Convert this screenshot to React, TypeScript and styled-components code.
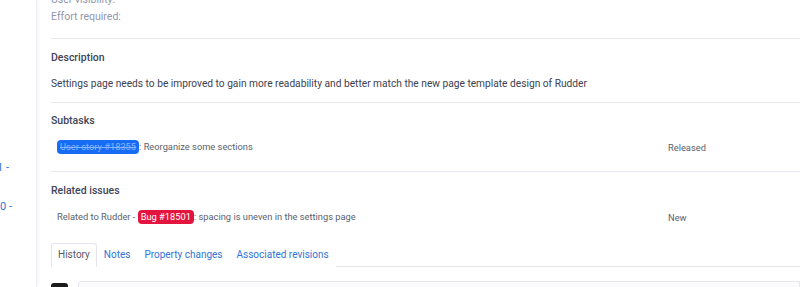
import React from 'react';
import styled, { createGlobalStyle } from 'styled-components';

const GlobalStyle = createGlobalStyle`
  html, body {
    margin: 0;
    padding: 0;
    background: #ffffff;
    overflow: hidden;
  }
  body {
    font-family: Roboto, 'Noto Sans', sans-serif;
    color: #41465a;
  }
`;

type Issue = {
  prefix?: string;
  tracker: string;
  number: number;
  subject: string;
  status: string;
  closed?: boolean;
  kind: 'story' | 'bug';
};

const subtasks: Issue[] = [
  { tracker: 'User story', number: 18355, subject: 'Reorganize some sections', status: 'Released', closed: true, kind: 'story' },
];

const related: Issue[] = [
  { prefix: 'Related to Rudder - ', tracker: 'Bug', number: 18501, subject: 'spacing is uneven in the settings page', status: 'New', kind: 'bug' },
];

const tabs = ['History', 'Notes', 'Property changes', 'Associated revisions'];

const IssueList: React.FC<{ issues: Issue[] }> = ({ issues }) => (
  <IssueTable>
    {issues.map(issue => (
      <IssueRow key={issue.number}>
        <Subject>
          {issue.prefix}
          <Badge kind={issue.kind} closed={issue.closed}>
            {issue.tracker} #{issue.number}
          </Badge>
          : {issue.subject}
        </Subject>
        <Status>{issue.status}</Status>
      </IssueRow>
    ))}
  </IssueTable>
);

const App: React.FC = () => {
  return (
    <Page>
      <GlobalStyle />
      <Sidebar>
        <VersionLink offset={-12} top={162}>7.1 -</VersionLink>
        <VersionLink offset={-9} top={27}>8.0 -</VersionLink>
      </Sidebar>
      <Main>
        <Attributes>
          <Attribute>User visibility:</Attribute>
          <Attribute>Effort required:</Attribute>
        </Attributes>

        <Section bottom={10}>
          <Heading>Description</Heading>
          <Paragraph>
            Settings page needs to be improved to gain more readability and better match the new page
            template design of Rudder
          </Paragraph>
        </Section>

        <Section top={9} bottom={14}>
          <Heading>Subtasks</Heading>
          <IssueList issues={subtasks} />
        </Section>

        <Section bottom={3} last>
          <Heading>Related issues</Heading>
          <IssueList issues={related} />
        </Section>

        <Tabs>
          {tabs.map((tab, i) => (
            <Tab key={tab} active={i === 0}>
              {tab}
            </Tab>
          ))}
        </Tabs>

        <Journal>
          <Avatar />
          <CommentBox />
        </Journal>
      </Main>
    </Page>
  );
};

const Page = styled.div`
  display: flex;
  height: 287px;
  overflow: hidden;
`;

const Sidebar = styled.div`
  width: 36px;
  flex-shrink: 0;
  overflow: hidden;
  border-right: 1px solid #efeff5;
  box-shadow: 1px 0 3px rgba(40, 40, 90, 0.06);
  display: flex;
  flex-direction: column;
`;

const VersionLink = styled.div<{ offset: number; top: number }>`
  margin-left: ${p => p.offset}px;
  margin-top: ${p => p.top}px;
  white-space: nowrap;
  font-size: 11px;
  line-height: 12px;
  color: #2f74d6;
`;

const Main = styled.div`
  flex: 1;
  padding-left: 14px;
  min-width: 0;
  display: flex;
  flex-direction: column;
`;

const Attributes = styled.div`
  margin-top: -9px;
  padding-bottom: 13px;
  border-bottom: 1px solid #e8e8f1;
`;

const Attribute = styled.div`
  font-size: 10.5px;
  line-height: 17px;
  color: #9196ad;
`;

const Section = styled.div<{ top?: number; bottom: number; last?: boolean }>`
  padding: ${p => p.top ?? 10}px 0 ${p => p.bottom}px;
  border-bottom: ${p => (p.last ? 'none' : '1px solid #e8e8f1')};
`;

const Heading = styled.div`
  font-size: 10.5px;
  font-weight: 500;
  line-height: 16px;
  padding: 1px 0 8px;
  color: #3f4456;
`;

const Paragraph = styled.p`
  margin: 0;
  padding-top: 2px;
  font-size: 10.2px;
  line-height: 16px;
  color: #3c4150;
`;

const IssueTable = styled.div`
  display: flex;
  flex-direction: column;
  gap: 3px;
`;

const IssueRow = styled.div`
  display: grid;
  grid-template-columns: 611px 1fr;
  align-items: center;
  padding-left: 6px;
  height: 20px;
  font-size: 9.3px;
  color: #5a5f70;
`;

const Subject = styled.div`
  white-space: nowrap;
`;

const Status = styled.div`
  color: #5a5f70;
`;

const Badge = styled.span<{ kind: 'story' | 'bug'; closed?: boolean }>`
  display: inline-block;
  padding: 0 3px;
  border-radius: 4px;
  line-height: 14px;
  color: ${p => (p.kind === 'story' ? '#86b5ff' : '#ffffff')};
  background: ${p => (p.kind === 'story' ? '#166cf5' : '#e3143e')};
  text-decoration: ${p => (p.closed ? 'line-through' : 'none')};
`;

const Tabs = styled.div`
  display: flex;
  margin-top: 13px;
  border-bottom: 1px solid #e4e5ef;
`;

const Tab = styled.div<{ active?: boolean }>`
  font-size: 10px;
  line-height: 22px;
  padding: 0 6px 1px;
  color: ${p => (p.active ? '#555a6a' : '#2f74d6')};
  border: 1px solid ${p => (p.active ? '#e4e5ef' : 'transparent')};
  border-bottom: none;
  border-radius: 3px 3px 0 0;
  background: #ffffff;
  margin-bottom: -1px;
`;

const Journal = styled.div`
  display: flex;
  gap: 10px;
  margin-top: 14px;
`;

const Avatar = styled.div`
  width: 17px;
  height: 17px;
  margin-top: 2px;
  border-radius: 3px;
  background: #1b1b1b;
  flex-shrink: 0;
`;

const CommentBox = styled.div`
  flex: 1;
  height: 40px;
  border: 1px solid #e6e7f0;
  border-radius: 3px 0 0 0;
  background: #fbfbfd;
`;

export default App;
